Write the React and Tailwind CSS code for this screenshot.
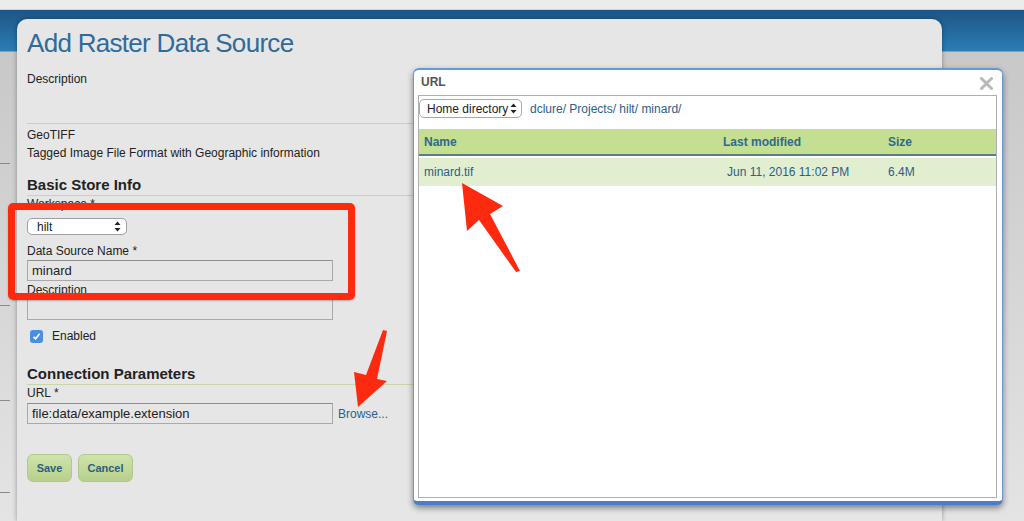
import React from 'react';

const SelectArrows = () => (
  <svg width="7" height="11" viewBox="0 0 7 11">
    <path d="M3.5 0.5 L6.5 4 H0.5Z M3.5 10.5 L0.5 7 H6.5Z" fill="#222" />
  </svg>
);

const Line = () => <div className="h-px bg-[#c8d5ad]" />;

const Field = ({ children, w = 'w-[306px]' }) => (
  <div className={`${w} h-[21px] border border-[#a9a9a9] border-t-[#8f8f8f] pl-[4px] text-[13px] leading-[19px] text-[#222]`}>
    {children}
  </div>
);

const Button = ({ children, w }) => (
  <div className={`${w} h-[28px] rounded-[6px] border border-[#b3c88e] bg-[linear-gradient(to_bottom,#cfe3ab,#b7d08c)] text-center text-[11px] font-bold leading-[26px] text-[#2b5f80]`}>
    {children}
  </div>
);

const FormPanel = () => (
  <div className="mt-[9px] h-[502px] w-[925px] rounded-t-[10px] bg-[#e6e6e6] pl-[10px] text-[12px] text-[#222] shadow-[0_0_5px_rgba(0,0,0,0.35)]">
    <h1 className="h-[39px] pt-[9px] text-[26px] leading-[30px] tracking-[-0.7px] text-[#2f6b9a]">
      Add Raster Data Source
    </h1>
    <div className="mt-[12px] leading-[18px]">Description</div>
    <div className="mt-[35px]">
      <Line />
    </div>
    <div className="mt-[2px] leading-[18px]">GeoTIFF</div>
    <div className="leading-[18px]">Tagged Image File Format with Geographic information</div>

    <h2 className="mt-[13px] h-[21px] border-b border-[#c8d5ad] text-[15px] font-bold leading-[20px]">
      Basic Store Info
    </h2>
    <div className="leading-[16px]">Workspace *</div>
    <div className="mt-[6px] flex h-[17px] w-[100px] items-center justify-between rounded-[5px] border border-[#a0a0a0] bg-white pl-[9px] pr-[5px] text-[12px]">
      <span>hilt</span>
      <SelectArrows />
    </div>
    <div className="mt-[8px] leading-[16px]">Data Source Name *</div>
    <div className="mt-[1px]">
      <Field>minard</Field>
    </div>
    <div className="leading-[18px]">Description</div>
    <div>
      <Field />
    </div>
    <div className="mt-[8px] flex h-[16px] items-center">
      <div className="ml-[3px] flex h-[13px] w-[13px] items-center justify-center rounded-[3px] bg-[#4a8ee6]">
        <svg width="9" height="9" viewBox="0 0 9 9">
          <path d="M1.5 4.8 L3.6 6.8 L7.6 1.8" stroke="#fff" strokeWidth="1.6" fill="none" />
        </svg>
      </div>
      <span className="ml-[9px] text-[12px]">Enabled</span>
    </div>

    <h2 className="mt-[20px] h-[21px] border-b border-[#c8d5ad] text-[15px] font-bold leading-[20px]">
      Connection Parameters
    </h2>
    <div className="leading-[17px]">URL *</div>
    <div className="mt-[1px] flex items-center gap-[5px]">
      <Field>file:data/example.extension</Field>
      <span className="text-[12px] text-[#2b5e8a]">Browse...</span>
    </div>
    <div className="mt-[30px] flex gap-[6px]">
      <Button w="w-[45px]">Save</Button>
      <Button w="w-[55px]">Cancel</Button>
    </div>
  </div>
);

const UrlDialog = () => (
  <div className="absolute left-[413px] top-[68px] flex h-[437px] w-[590px] flex-col rounded-[6px] border border-t-2 border-b-[4px] border-[#6b96d6] border-b-[#4c7dcc] bg-white shadow-[0_3px_6px_rgba(0,0,0,0.45)]">
    <div className="relative h-[25px] pl-[7px] text-[12px] font-bold leading-[25px] text-[#555]">
      URL
      <svg className="absolute right-[9px] top-[7px]" width="13" height="13" viewBox="0 0 13 13">
        <path d="M1.5 1.5 L11.5 11.5 M11.5 1.5 L1.5 11.5" stroke="#b9b9b9" strokeWidth="3" strokeLinecap="round" />
      </svg>
    </div>
    <div className="mb-[3px] ml-[4px] mr-[5px] flex-1 border border-[#b0b0b0] text-[12px]">
      <div className="mt-[3px] flex items-center gap-[8px]">
        <div className="flex h-[19px] w-[103px] items-center justify-between whitespace-nowrap rounded-[5px] border border-[#a8a8a8] pl-[7px] pr-[4px] text-[#222]">
          <span>Home directory</span>
          <SelectArrows />
        </div>
        <span className="text-[#2b5e8a]">dclure/ Projects/ hilt/ minard/</span>
      </div>
      <div className="mt-[11px] flex h-[27px] items-center border-b-2 border-[#5c7b8c] bg-[#c4de92] font-bold text-[#2e6a8e]">
        <span className="w-[304px] pl-[5px]">Name</span>
        <span className="w-[165px]">Last modified</span>
        <span>Size</span>
      </div>
      <div className="mt-[2px] flex h-[28px] items-center bg-[#e1eecf] text-[#2b5e8a]">
        <span className="w-[304px] pl-[5px]">minard.tif</span>
        <span className="w-[165px] pl-[4px]">Jun 11, 2016 11:02 PM</span>
        <span>6.4M</span>
      </div>
    </div>
  </div>
);

const Annotations = () => (
  <>
    <div className="absolute left-[8px] top-[203px] h-[97px] w-[347px] rounded-[5px] border-[7px] border-[#fe2a10] shadow-[0_1px_2px_rgba(0,0,0,0.25)]" />
    <svg className="pointer-events-none absolute left-0 top-0" width="1024" height="521">
      <polygon
        points="383,330 387,331 377,379 387,381 358,407 354,372 366,375"
        fill="#fe2a10"
      />
      <polygon
        points="462,183 503,206 490,214 520,271 516,272 479,220 467,231"
        fill="#fe2a10"
      />
    </svg>
  </>
);

export default function App() {
  return (
    <div className="relative h-[521px] w-[1024px] overflow-hidden bg-[#e6e6e6] font-['Liberation_Sans',Arial,sans-serif]">
      <div className="h-[9px] bg-[#ececec]" />
      <div className="h-px bg-[#cddbb3]" />
      <div className="flex h-[511px] bg-[linear-gradient(to_bottom,#1d5584_0px,#2b7db6_41px,#c8c8c8_42px,#e4e4e4_100%)]">
        <div className="flex w-[17px] shrink-0 flex-col">
          <div className="mt-[153px] h-px w-[10px] bg-[#8a8a8a]" />
          <div className="mt-[141px] h-px w-[10px] bg-[#8a8a8a]" />
          <div className="mt-[94px] h-px w-[10px] bg-[#8a8a8a]" />
          <div className="mt-[91px] h-px w-[10px] bg-[#8a8a8a]" />
        </div>
        <FormPanel />
      </div>
      <UrlDialog />
      <Annotations />
    </div>
  );
}
